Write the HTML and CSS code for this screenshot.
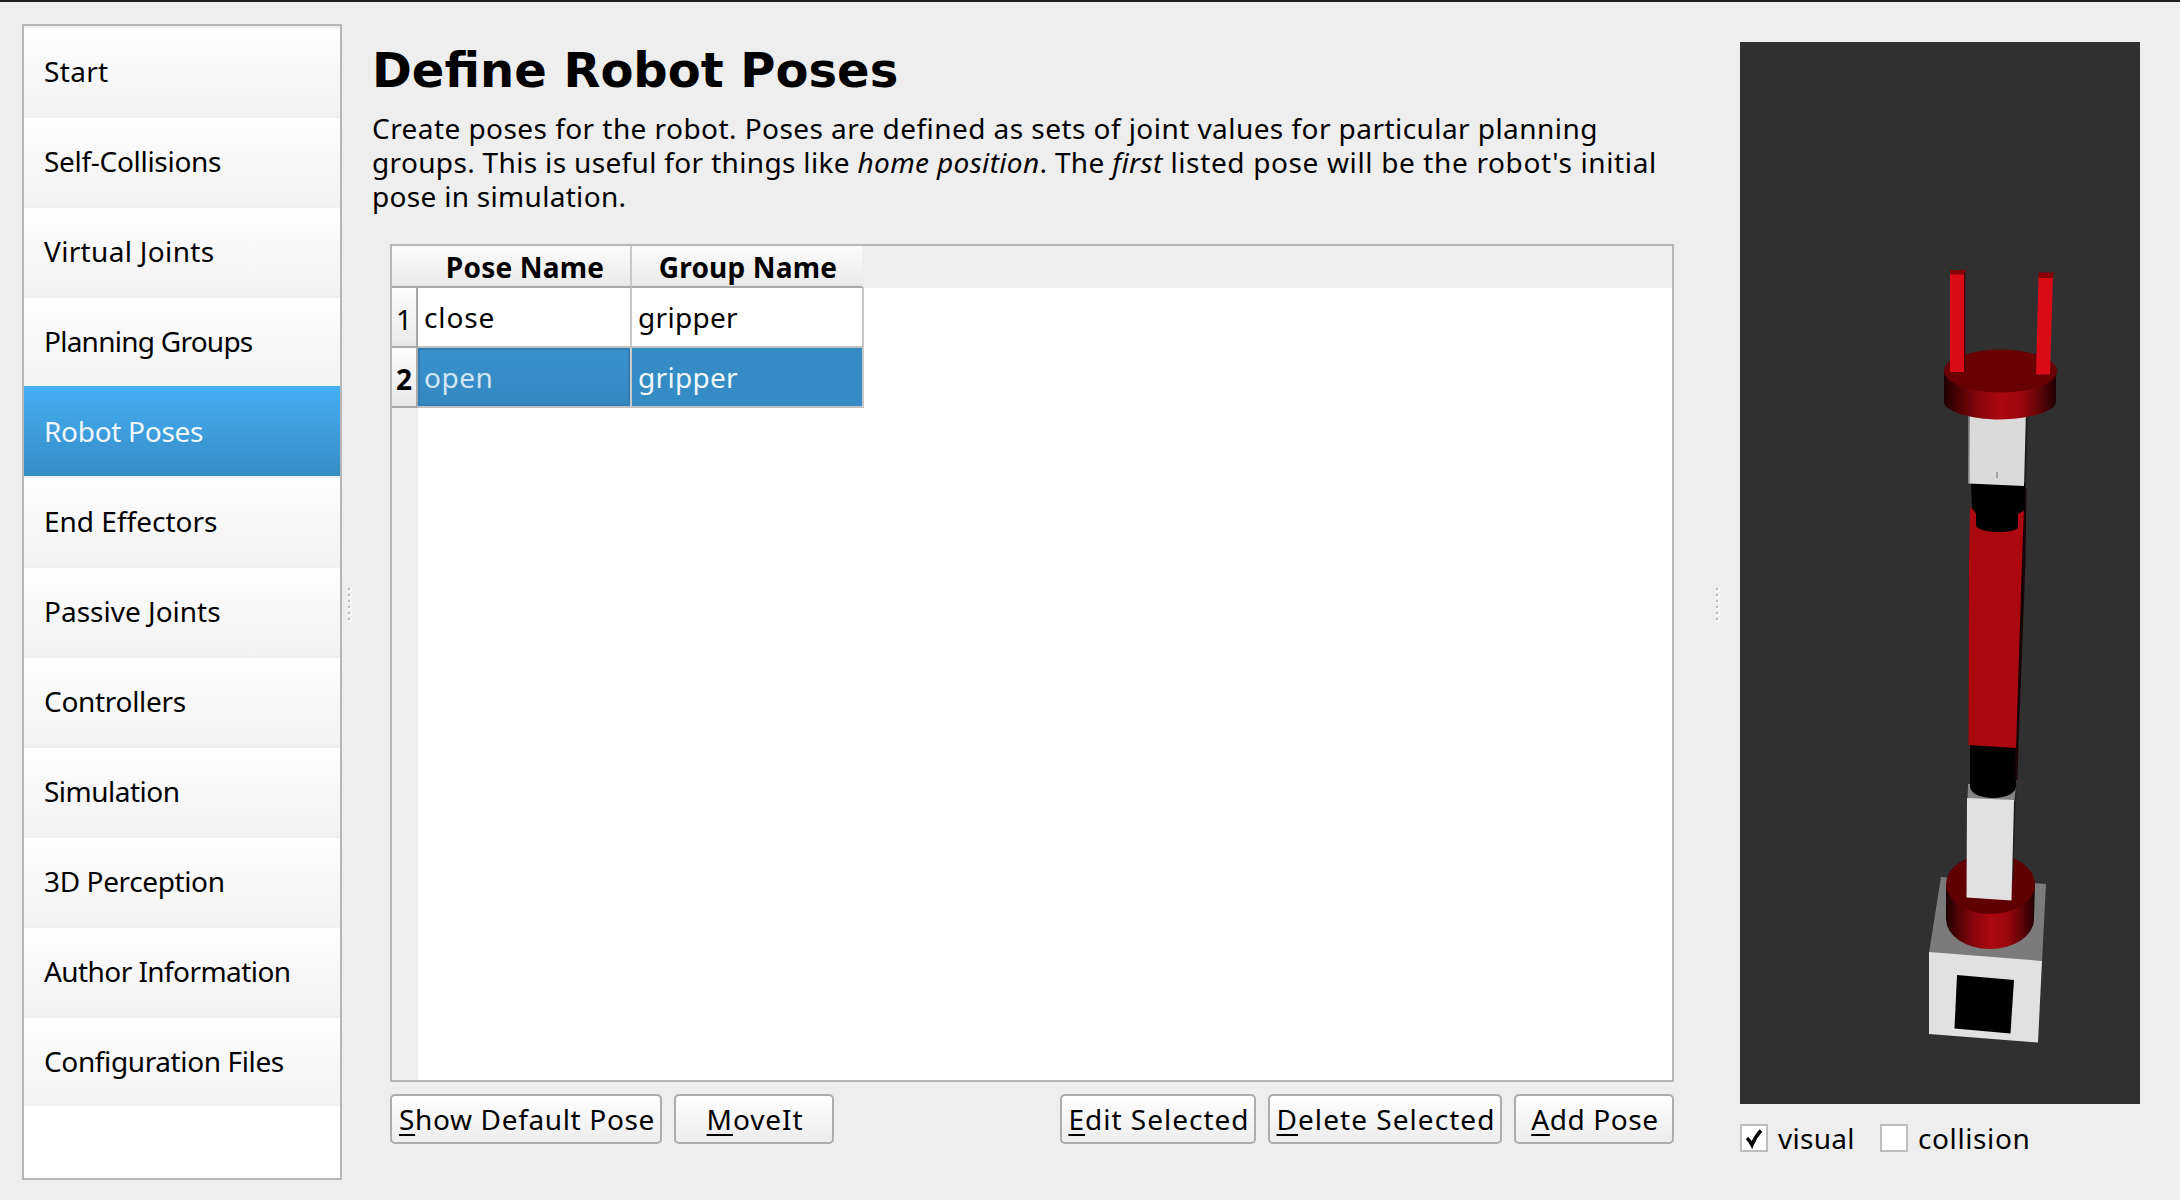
FILE: index.html
```html
<!DOCTYPE html>
<html lang="en">
<head>
<meta charset="utf-8">
<title>MoveIt Setup Assistant</title>
<link rel="stylesheet" href="styles.css">
</head>
<body>
<div class="window">
  <nav class="sidebar">
    <a class="nav-item ls-start">Start</a>
    <a class="nav-item ls-self">Self-Collisions</a>
    <a class="nav-item ls-virtual">Virtual Joints</a>
    <a class="nav-item ls-planning">Planning Groups</a>
    <a class="nav-item ls-poses active">Robot Poses</a>
    <a class="nav-item">End Effectors</a>
    <a class="nav-item">Passive Joints</a>
    <a class="nav-item ls-self">Controllers</a>
    <a class="nav-item ls-sim">Simulation</a>
    <a class="nav-item ls-3d">3D Perception</a>
    <a class="nav-item ls-author">Author Information</a>
    <a class="nav-item ls-3d">Configuration Files</a>
  </nav>

  <div class="splitter splitter-left"><i></i><i></i><i></i><i></i><i></i><i></i></div>

  <main class="content">
    <h1>Define Robot Poses</h1>
    <p class="intro">Create poses for the robot. Poses are defined as sets of joint values for particular planning<br><span class="ls-l2">groups. This is useful for things like <em>home position</em>. The <em>first</em></span> <span class="ls-l2b">listed pose will be the robot's initial</span><br><span class="ls-l3">pose in simulation.</span></p>

    <div class="table">
      <div class="thead">
        <div class="corner"></div>
        <div class="th col-pose">Pose Name</div>
        <div class="th col-group">Group Name</div>
      </div>
      <div class="tbody">
        <div class="row">
          <div class="num">1</div>
          <div class="cell col-pose ls-close">close</div>
          <div class="cell col-group">gripper</div>
        </div>
        <div class="row selected">
          <div class="num">2</div>
          <div class="cell col-pose focus ls-open">open</div>
          <div class="cell col-group">gripper</div>
        </div>
        <div class="gutter"></div>
      </div>
    </div>

    <div class="actions">
      <button class="btn b-show"><u>S</u>how Default Pose</button>
      <button class="btn b-move"><u>M</u>oveIt</button>
      <span class="spacer"></span>
      <button class="btn b-edit"><u>E</u>dit Selected</button>
      <button class="btn b-delete"><u>D</u>elete Selected</button>
      <button class="btn b-add"><u>A</u>dd Pose</button>
    </div>
  </main>

  <div class="splitter splitter-right"><i></i><i></i><i></i><i></i><i></i><i></i></div>

  <aside class="viewer">
    <svg class="scene" viewBox="1740 42 400 1062" width="400" height="1062">
      <defs>
        <linearGradient id="disc" x1="0" x2="1" y1="0" y2="0">
          <stop offset="0" stop-color="#1c0002"/><stop offset=".12" stop-color="#4c0205"/><stop offset=".3" stop-color="#85050b"/><stop offset=".5" stop-color="#ac080f"/><stop offset=".68" stop-color="#9d070e"/><stop offset=".86" stop-color="#5c0307"/><stop offset="1" stop-color="#1e0002"/>
        </linearGradient>
      </defs>
      <rect x="1740" y="42" width="400" height="1062" fill="#303030"/>
      <!-- base block -->
      <path d="M1941 877L2046 884L2042 962L1929 953Z" fill="#7b7b7b"/>
      <path d="M1929 952L2042 961L2038 1042.500L1929 1034Z" fill="#e1e1e1"/>
      <path d="M1957 975L2014 980L2010.500 1033.500L1954.500 1028.500Z" fill="#000"/>
      <!-- rotating base -->
      <path d="M1946 884V919A44 30 0 0 0 2034 919L2035 884Z" fill="url(#disc)"/>
      <ellipse cx="1990.500" cy="884" rx="44.500" ry="30" fill="#600003"/>
      <!-- lower arm -->
      <path d="M2014 790L2016.500 788L2013 880L2011 880Z" fill="#222"/>
      <path d="M1968 784H2016L2014.500 801H1967.500Z" fill="#858585"/>
      <path d="M1967 798L2014 800L2011.500 900.500L1966.500 897.500Z" fill="#e1e1e1"/>
      <path d="M1970 745H2016V786C2016 802 1970 802 1970 786Z" fill="#000"/>
      <!-- upper arm -->
      <path d="M2020 488H2026.500L2025.500 560L2018.500 746L2017.500 780H2015Z" fill="#190506"/>
      <path d="M1970 508H2024L2022 560L2016 748L1968.500 745L1969 560Z" fill="#ac080f"/>
      <path d="M2025 416H2028L2026 488H2023Z" fill="#202020"/>
      <path d="M1971 483H2025V510L2018 514V527C2018 534 1976 534 1976 525V514L1972 508Z" fill="#000"/>
      <path d="M1969.500 410H2026L2024 486L1968.500 483.500Z" fill="#dadada"/>
      <path d="M1969 416V483" stroke="#8b8b8b" stroke-width="1.500"/>
      <path d="M1997 472V478" stroke="#a6a6a6" stroke-width="2"/>
      <!-- gripper -->
      <path d="M1944 371V402C1944 411 1970 419.500 2000 419.500S2056 411 2056 402V371Z" fill="url(#disc)"/>
      <ellipse cx="2000.500" cy="371" rx="56.500" ry="21.500" fill="#690004"/>
      <path d="M1964 271H1965.500V360L1964 371Z" fill="#480104"/>
      <path d="M1950 273H1964V372H1950Z" fill="#da0b16"/>
      <path d="M1950 270H1966L1964 274.500H1950Z" fill="#850007"/>
      <path d="M2038.500 276H2053L2050 374.500H2036Z" fill="#da0b16"/>
      <path d="M2038.500 272.500H2054L2052.500 278H2038.500Z" fill="#850007"/>
    </svg>
    <div class="options">
      <label class="check"><span class="box"><svg viewBox="0 0 28 28" width="28" height="28"><path d="M7 14Q10 17 12 21Q15 13 21 6.500" fill="none" stroke="#000" stroke-width="3.400"/></svg></span><span class="ls-visual">visual</span></label>
      <label class="check"><span class="box"></span><span class="ls-collision">collision</span></label>
    </div>
  </aside>
</div>
</body>
</html>
```
FILE: styles.css
```css
* { box-sizing: border-box; }

body {
  margin: 0;
  background: #eeeeee;
  color: #000;
  font: 28px/34px "Noto Sans", "Open Sans", sans-serif;
}

.window {
  display: flex;
  width: 2180px;
  height: 1200px;
  border-top: 2px solid #241f21;
}

/* navigation list */
.sidebar {
  width: 320px;
  height: 1156px;
  margin: 22px 0 0 22px;
  background: #fff;
  border: 2px solid #b6b6b6;
}
.nav-item {
  display: block;
  height: 90px;
  padding-left: 20px;
  border-top: 2px solid #efefef;
  background: linear-gradient(#fefefe, #f2f2f2) padding-box;
  line-height: 86px;
  white-space: nowrap;
}
.nav-item.active {
  background: linear-gradient(#44aff4, #378cc4) border-box;
  border-top-color: transparent;
  color: #eff7fc;
}

/* splitter handles */
.splitter {
  display: flex;
  flex-direction: column;
  gap: 4px;
  padding-top: 586px;
}
.splitter i {
  width: 2px;
  height: 2px;
  background: #b8b8b8;
  box-shadow: 2px 0 #f8f8f8, 0 2px #f8f8f8, 2px 2px #f8f8f8;
}
.splitter-left { width: 30px; padding-left: 6px; }
.splitter-right { width: 24px; }

/* main page */
.content {
  width: 1344px;
  padding-top: 39px;
}
h1 {
  margin: 0;
  font: bold 48px/58px "DejaVu Sans", sans-serif;
}
.intro {
  height: 102px;
  margin: 12px 0 31px;
  letter-spacing: 0.44px;
  white-space: nowrap;
}

.table {
  display: flex;
  flex-direction: column;
  width: 1284px;
  height: 838px;
  margin-left: 18px;
  background: #fff;
  border: 2px solid #b6b6b6;
}
.thead { display: flex; height: 42px; background: #eee; }
.corner, .th {
  border-bottom: 2px solid #a9a9a9;
  background: linear-gradient(#fcfcfc, #ececec 90%, #e4e4e4) padding-box;
}
.corner { width: 26px; }
.th {
  padding-left: 2px;
  border-right: 2px solid #c8c8c8;
  font-weight: bold;
  line-height: 42px;
  text-align: center;
  letter-spacing: 0.2px;
}
.th.col-group { border-right-color: transparent; }
.col-pose { width: 214px; }
.col-group { width: 232px; }
.tbody { display: flex; flex: 1; flex-direction: column; }
.row { display: flex; height: 60px; }
.num {
  width: 26px;
  border-right: 2px solid #a9a9a9;
  border-bottom: 2px solid #a9a9a9;
  background: linear-gradient(#fcfcfc, #ececec 90%, #e4e4e4);
  line-height: 62px;
  text-align: center;
}
.cell {
  padding-left: 6px;
  border-right: 2px solid #c8c8c8;
  border-bottom: 2px solid #c0c0c0;
  line-height: 58px;
  letter-spacing: 0.3px;
}
.selected .num { font-weight: bold; }
.selected .cell { background: #358cc5; color: #eff7fc; }
.selected .focus {
  background: linear-gradient(#3992cd, #3487bf);
  box-shadow: inset 0 0 0 2px #3080b5;
  color: #cfe5f4;
}
.gutter { flex: 1; width: 26px; background: #eee; }

/* buttons */
.actions { display: flex; gap: 12px; width: 1284px; margin: 12px 0 0 18px; }
.spacer { flex: 1; }
.btn {
  height: 50px;
  padding: 0 0 0 2px;
  border: 2px solid #adadad;
  border-radius: 5px;
  background: linear-gradient(#fefefe, #ededed);
  color: #000;
  font: inherit;
  line-height: 46px;
  white-space: nowrap;
}
.btn u { text-decoration-thickness: 2px; text-underline-offset: 4px; text-decoration-skip-ink: none; }
.b-show { width: 272px; letter-spacing: 0.65px; }
.b-move { width: 160px; letter-spacing: 0.9px; }
.b-edit { width: 196px; letter-spacing: 1px; }
.b-delete { width: 234px; letter-spacing: 1.05px; }
.b-add { width: 160px; letter-spacing: 0.6px; }

/* 3D view */
.viewer { width: 400px; padding-top: 40px; }
.scene { display: block; }
.options { display: flex; gap: 24px; margin-top: 20px; }
.check { display: flex; gap: 10px; height: 28px; line-height: 29px; }
.check:first-child { width: 116px; }
.box { width: 28px; height: 28px; border: 2px solid #bdbdbd; background: #fff; }
.box svg { display: block; margin: -2px; }

/* label tracking */
.ls-start, .ls-virtual { letter-spacing: 0.33px; }
.ls-self { letter-spacing: -0.3px; }
.ls-planning { letter-spacing: -0.75px; }
.ls-poses { letter-spacing: -0.3px; }
.ls-sim { letter-spacing: -0.5px; }
.ls-3d { letter-spacing: -0.38px; }
.ls-author { letter-spacing: -0.57px; }
.ls-l2 { letter-spacing: 0.34px; }
.ls-l2b { letter-spacing: 0.64px; }
.ls-l3 { letter-spacing: 0.3px; }
.ls-close { letter-spacing: 0.9px; }
.ls-open { letter-spacing: 0.5px; }
.ls-visual { letter-spacing: 0.3px; }
.ls-collision { letter-spacing: 0.6px; }
```
